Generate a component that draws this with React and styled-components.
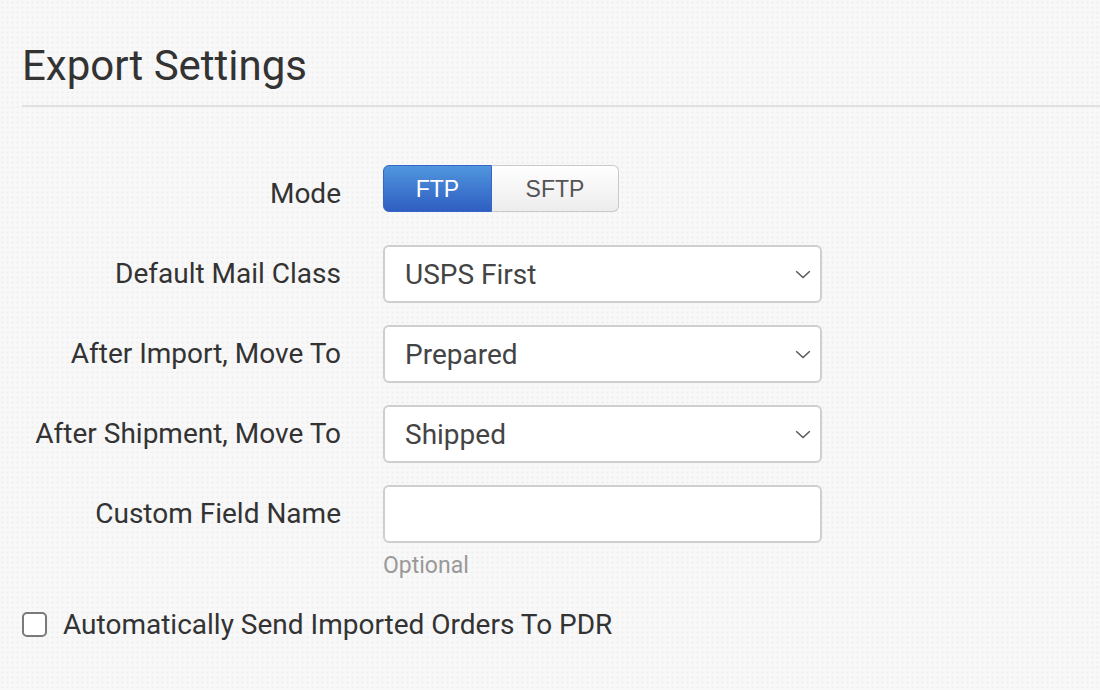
import React from "react";
import styled, { createGlobalStyle } from "styled-components";

const GlobalStyle = createGlobalStyle`
  html, body {
    margin: 0;
    padding: 0;
  }
  body {
    background-color: #f8f8f8;
    background-image: radial-gradient(circle, #f1f1f1 1px, transparent 1.3px);
    background-size: 5px 5px;
    font-family: Roboto, "Liberation Sans", sans-serif;
    color: #333;
  }
`;

const Page = styled.div`
  width: 1100px;
  height: 690px;
  box-sizing: border-box;
  padding: 41px 0 0 22px;
  overflow: hidden;
`;

const Title = styled.h1`
  margin: 0;
  font-size: 42px;
  line-height: 50px;
  font-weight: 400;
  color: #333;
`;

const Divider = styled.div`
  height: 2px;
  background: #e0e0e0;
  margin-top: 14px;
`;

const Form = styled.div`
  display: grid;
  grid-template-columns: 319px 439px;
  column-gap: 42px;
  row-gap: 22px;
  margin-top: 58px;
  align-items: start;
`;

const Label = styled.div`
  text-align: right;
  font-size: 28px;
  line-height: ${(p) => (p.short ? "47px" : "58px")};
  padding-top: ${(p) => (p.short ? "5px" : "0")};
  color: #333;
  white-space: nowrap;
`;

const Toggle = styled.div`
  display: flex;
  margin-bottom: 11px;
`;

const ToggleButton = styled.button`
  height: 47px;
  padding: 1px 0 0;
  width: ${(p) => (p.first ? "109px" : "127px")};
  font-family: "Liberation Sans", Arial, sans-serif;
  font-size: 23px;
  border: 1px solid ${(p) => (p.active ? "#3766c6" : "#c9c9c9")};
  border-radius: ${(p) => (p.first ? "6px 0 0 6px" : "0 6px 6px 0")};
  border-left-width: ${(p) => (p.first ? "1px" : "0")};
  color: ${(p) => (p.active ? "#fff" : "#555")};
  background: ${(p) =>
    p.active
      ? "linear-gradient(#5096dd, #2f5ec2)"
      : "linear-gradient(#ffffff, #ececec)"};
`;

const SelectBox = styled.div`
  height: 58px;
  box-sizing: border-box;
  border: 2px solid #cfcfcf;
  border-radius: 6px;
  background: #fff;
  display: flex;
  align-items: center;
  justify-content: space-between;
  padding: 0 9px 0 20px;
  font-size: 28px;
  color: #444;
`;

const Chevron = styled.svg`
  width: 16px;
  height: 9px;
`;

const Field = styled.div`
  display: flex;
  flex-direction: column;
`;

const TextInput = styled.div`
  height: 58px;
  box-sizing: border-box;
  border: 2px solid #cfcfcf;
  border-radius: 6px;
  background: #fff;
`;

const Hint = styled.div`
  margin-top: 10px;
  font-size: 23px;
  line-height: 26px;
  color: #999;
`;

const CheckRow = styled.label`
  display: flex;
  align-items: center;
  gap: 16px;
  margin-top: 29px;
  font-size: 28px;
  color: #333;
`;

const Box = styled.span`
  width: 25px;
  height: 25px;
  box-sizing: border-box;
  border: 2px solid #7a7a7a;
  border-radius: 5px;
  background: #fff;
`;

function Select({ value }) {
  return (
    <SelectBox>
      <span>{value}</span>
      <Chevron viewBox="0 0 16 9">
        <path d="M1.2 1.2 L8 7.6 L14.8 1.2" fill="none" stroke="#555" strokeWidth="1.4" />
      </Chevron>
    </SelectBox>
  );
}

export default function App() {
  return (
    <Page>
      <GlobalStyle />
      <Title>Export Settings</Title>
      <Divider />
      <Form>
        <Label short>Mode</Label>
        <Toggle>
          <ToggleButton first active>FTP</ToggleButton>
          <ToggleButton>SFTP</ToggleButton>
        </Toggle>

        <Label>Default Mail Class</Label>
        <Select value="USPS First" />

        <Label>After Import, Move To</Label>
        <Select value="Prepared" />

        <Label>After Shipment, Move To</Label>
        <Select value="Shipped" />

        <Label>Custom Field Name</Label>
        <Field>
          <TextInput />
          <Hint>Optional</Hint>
        </Field>
      </Form>
      <CheckRow>
        <Box />
        Automatically Send Imported Orders To PDR
      </CheckRow>
    </Page>
  );
}
